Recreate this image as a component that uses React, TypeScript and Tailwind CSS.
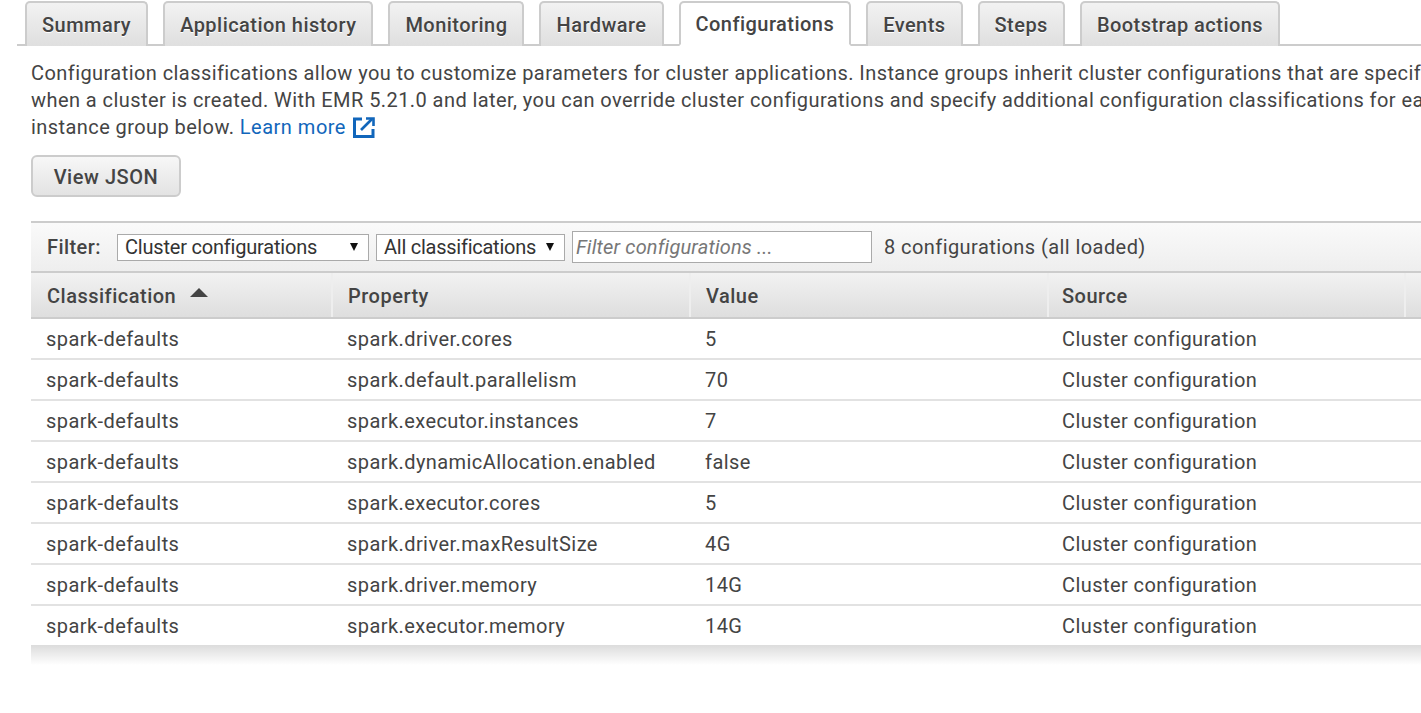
const tabs = ["Summary", "Application history", "Monitoring", "Hardware", "Configurations", "Events", "Steps", "Bootstrap actions"];

const rows = [
    ["spark.driver.cores", "5"],
    ["spark.default.parallelism", "70"],
    ["spark.executor.instances", "7"],
    ["spark.dynamicAllocation.enabled", "false"],
    ["spark.executor.cores", "5"],
    ["spark.driver.maxResultSize", "4G"],
    ["spark.driver.memory", "14G"],
    ["spark.executor.memory", "14G"],
];

const columns = "grid grid-cols-[300px_358px_358px_357px_60px]";

const headers = [
    { label: "Classification", cell: "pl-4" },
    { label: "Property", cell: "border-l-2 border-[#eee] pl-[15px]" },
    { label: "Value", cell: "border-l-2 border-[#eee] pl-[15px]" },
    { label: "Source", cell: "border-l-2 border-[#eee] pl-[13px]" },
    { label: "", cell: "border-l-2 border-[#eee]" },
];

function Caret() {
    return <svg width="8" height="8" viewBox="0 0 8 8" className="ml-auto fill-[#111]"><path d="M0 0h8L4 8z" /></svg>;
}

export default function App() {
    return <div className="h-[713px] w-[1421px] overflow-hidden bg-white font-['Roboto',sans-serif] text-[20px] tracking-[0.43px] text-[#444]">
        {/* Tabs */}
        <div className="ml-[17px] flex h-[46px] gap-[15px] border-b-2 border-[#ccc] pl-2 pt-px">
            {tabs.map((tab) => {
                const active = tab === "Configurations";
                return <div
                    key={tab}
                    className={`flex h-[45px] items-center rounded-t-[5px] border-2 px-[15px] pt-px text-[20px] font-medium leading-none tracking-[0.46px] ${active ? "border-[#ccc] border-b-white bg-white" : "border-[#ccc] border-b-0 bg-gradient-to-b from-[#f2f2f2] to-[#dfdfdf] [text-shadow:0_1px_0_#fff]"}`}
                >
                    {tab}
                </div>;
            })}
        </div>

        <div className="pl-[31px]">
            {/* Description */}
            <div className="mt-[14px] whitespace-nowrap text-[20px] leading-[27px]">
                <div>Configuration classifications allow you to customize parameters for cluster applications. Instance groups inherit cluster configurations that are specified</div>
                <div>when a cluster is created. With EMR 5.21.0 and later, you can override cluster configurations and specify additional configuration classifications for each</div>
                <div className="flex items-center">
                    instance group below.&nbsp;<span className="tracking-[0.5px] text-[#1166bb]">Learn more</span>
                    <svg width="24" height="23" viewBox="0 0 24 23" fill="none" stroke="#1166bb" className="ml-[6px]">
                        <path d="M10 3H2.5v17.5H21V13" strokeWidth="3" />
                        <path d="M9 14 20 3" strokeWidth="2.6" />
                        <path d="M14 2.5h7.5V10" strokeWidth="2.6" />
                    </svg>
                </div>
            </div>

            <button className="mt-[14px] flex h-[42px] w-[150px] items-center justify-center rounded-[6px] border-2 border-[#ccc] bg-gradient-to-b from-[#f7f7f7] to-[#e3e3e3] pt-px text-[20px] font-medium tracking-[0.55px]">
                View JSON
            </button>

            {/* Filter bar */}
            <div className="mt-[24px] flex h-[52px] w-[1420px] items-center border-y-2 border-[#ccc] bg-gradient-to-b from-[#fafafa] to-[#eee] pl-4">
                <span className="w-[70px] font-medium">Filter:</span>
                <div className="flex h-[27px] w-[252px] items-center border border-[#aaa] bg-white pl-[7px] pr-[10px] tracking-[-0.2px] text-[#333]">Cluster configurations<Caret /></div>
                <div className="ml-[7px] flex h-[27px] w-[189px] items-center border border-[#aaa] bg-white pl-[7px] pr-[10px] tracking-[-0.25px] text-[#333]">All classifications<Caret /></div>
                <div className="ml-[7px] flex h-[32px] w-[300px] items-center border border-[#aaa] bg-white px-[3px] italic tracking-[0.15px] text-[#777]">Filter configurations ...</div>
                <span className="ml-[12px]">8 configurations (all loaded)</span>
            </div>

            {/* Header */}
            <div className={`${columns} h-[46px] border-b-2 border-[#ccc] bg-gradient-to-b from-[#f2f2f2] to-[#dedede] font-medium tracking-[0.5px]`}>
                {headers.map(({ label, cell }, i) => (
                    <div key={i} className={`flex items-center pt-px ${cell}`}>
                        {label}
                        {i === 0 && <svg width="18" height="9" viewBox="0 0 18 9" className="mb-[6px] ml-[14px] fill-[#444]"><path d="M0 9 9 0l9 9z" /></svg>}
                    </div>
                ))}
            </div>

            {/* Rows */}
            {rows.map(([property, value], i) => (
                <div key={property} className={`${columns} items-center ${i < rows.length - 1 ? "h-[41px] border-b-2 border-[#e2e2e2]" : "h-[39px]"}`}>
                    <div className="pl-[15px]">spark-defaults</div>
                    <div className="pl-[16px]">{property}</div>
                    <div className="pl-[16px]">{value}</div>
                    <div className="pl-[15px]">Cluster configuration</div>
                </div>
            ))}

            <div className="h-5 bg-gradient-to-b from-[#dcdcdc] to-white" />
        </div>
    </div>;
}
